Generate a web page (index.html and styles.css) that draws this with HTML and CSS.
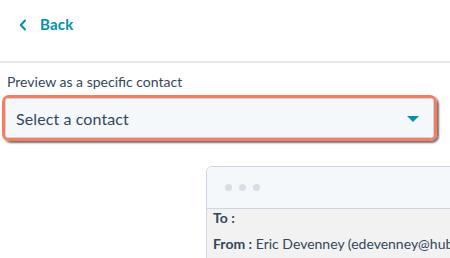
FILE: index.html
```html
<!DOCTYPE html>
<html lang="en">
  <head>
    <meta charset="UTF-8" />
    <title>Preview</title>
    <link rel="stylesheet" href="styles.css">
  </head>
  <body>
    <header class="header">
      <a class="back" href="#">
        <svg class="back__icon" width="8" height="12" viewBox="0 0 8 12">
          <path d="M6 1.5 L1.8 6 L6 10.5" fill="none" stroke="currentColor" stroke-width="2" stroke-linecap="round" stroke-linejoin="round" />
        </svg>
        <span>Back</span>
      </a>
    </header>
    <main class="main">
      <label class="field__label">Preview as a specific contact</label>
      <div class="highlight">
        <div class="select">
          <span class="select__text">Select a contact</span>
          <span class="select__caret"></span>
        </div>
      </div>
      <div class="email">
        <div class="email__bar">
          <span class="email__dot"></span>
          <span class="email__dot"></span>
          <span class="email__dot"></span>
        </div>
        <div class="email__meta">
          <div class="email__row"><b>To :</b></div>
          <div class="email__row"><b>From :</b> Eric Devenney (edevenney@hubspot.com)</div>
        </div>
      </div>
    </main>
  </body>
</html>
```

FILE: styles.css
```css
:root {
  --color-text: #33475b;
  --color-link: #0091ae;
  --color-orange: #f97b5c;
  --color-border: #cbd6e2;
  --color-field: #f5f8fa;
}

*,
*::before,
*::after {
  box-sizing: border-box;
}

html,
body {
  height: 100%;
}

body {
  margin: 0;
  overflow: hidden;
  font-family: Lato, "Open Sans", sans-serif;
  color: var(--color-text);
  background: #fff;
}

.header {
  height: 63px;
  padding: 14px 0 0 19px;
  display: flex;
  align-items: flex-start;
  border-bottom: 2px solid #e7e7e7;
}

.back {
  display: flex;
  align-items: center;
  gap: 13px;
  color: var(--color-link);
  text-decoration: none;
  font-size: 15px;
  line-height: 20px;
  font-weight: 700;
  letter-spacing: 0.2px;
}

.back__icon {
  margin-top: 1px;
}

.main {
  padding: 10px 0 0 7px;
}

.field__label {
  display: block;
  font-size: 14px;
  line-height: 18px;
}

.highlight {
  width: 435px;
  margin: 4px 0 0 -5px;
  border: 3px solid var(--color-orange);
  border-radius: 7px;
  box-shadow: 2px 2px 2px rgba(0, 0, 0, 0.55);
}

.select {
  height: 40px;
  padding: 0 14px 0 10px;
  display: flex;
  align-items: center;
  justify-content: space-between;
  background: var(--color-field);
  border: 1px solid var(--color-border);
  border-radius: 3px;
  font-size: 16px;
  letter-spacing: 0.1px;
}

.select__caret {
  width: 0;
  height: 0;
  border-left: 6px solid transparent;
  border-right: 6px solid transparent;
  border-top: 6px solid var(--color-link);
  margin-top: 1px;
}

.email {
  width: 290px;
  margin: 25px 0 0 199px;
  border: 1px solid var(--color-border);
  border-radius: 6px 0 0 0;
  overflow: hidden;
  background: #f2f2f2;
}

.email__bar {
  height: 42px;
  padding: 0 0 0 18px;
  display: flex;
  align-items: center;
  gap: 7px;
  background: var(--color-field);
  border-bottom: 1px solid var(--color-border);
}

.email__dot {
  width: 7px;
  height: 7px;
  border-radius: 50%;
  background: #d6dee7;
}

.email__meta {
  padding: 1px 6px 24px;
  font-size: 14px;
  white-space: nowrap;
}

.email__row {
  line-height: 16px;
}

.email__row + .email__row {
  margin-top: 10px;
}

.email__row b {
  font-weight: 700;
}
```
